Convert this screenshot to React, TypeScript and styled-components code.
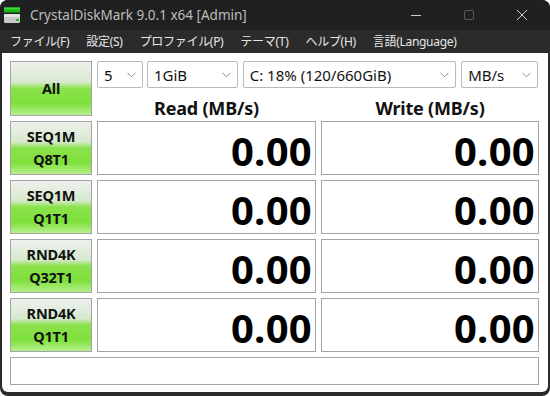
import { Fragment } from "react";
import styled, { createGlobalStyle } from "styled-components";

const GlobalStyle = createGlobalStyle`
  html, body {
    margin: 0;
    padding: 0;
    background: #ffffff;
  }
  * {
    box-sizing: border-box;
  }
`;

const UI_FONT = `"Noto Sans", "Noto Sans CJK JP", sans-serif`;

const WindowFrame = styled.div`
  width: 550px;
  height: 396px;
  display: flex;
  flex-direction: column;
  background: #2b2b2b;
  border-radius: 8px;
  overflow: hidden;
  font-family: ${UI_FONT};
`;

const TitleBar = styled.div`
  height: 30px;
  display: flex;
  align-items: center;
  background: #202020;
  padding-left: 4px;
`;

const TitleText = styled.span`
  margin-left: 9px;
  font-size: 13.5px;
  color: #bdbdbd;
  flex: 1;
`;

const WindowControls = styled.div`
  display: flex;
  height: 100%;
  padding-right: 2px;
`;

const ControlButton = styled.div`
  width: 53px;
  height: 100%;
  display: flex;
  align-items: center;
  justify-content: center;
`;

const MenuBar = styled.div`
  height: 22px;
  display: flex;
  align-items: center;
  padding-left: 1px;
  background: #2b2b2b;
`;

const MenuItem = styled.span`
  padding: 0 8px 0 9px;
  font-size: 12px;
  color: #e6e6e6;
  letter-spacing: -0.3px;
`;

const Client = styled.div`
  flex: 1;
  margin: 1px 2px 4px 2px;
  background: #ffffff;
  border-radius: 0 0 6px 6px;
  padding: 8px 9px 0 8px;
  display: grid;
  grid-template-columns: 82px 219px 218px;
  grid-template-rows: 55px repeat(4, 54px) 28px;
  gap: 5px;
`;

const TestButton = styled.div`
  border: 1px solid #a4a4a4;
  background: linear-gradient(
    to bottom,
    #eef1ee 0%,
    #d6e9cd 38%,
    #8be24c 50%,
    #7ee03a 78%,
    #b6f08e 100%
  );
  display: flex;
  flex-direction: column;
  align-items: center;
  justify-content: center;
  font-weight: 700;
  font-size: 14.5px;
  line-height: 23px;
  color: #111;
  letter-spacing: -0.2px;
`;

const TopPanel = styled.div`
  grid-column: 2 / 4;
  display: flex;
  flex-direction: column;
`;

const SelectRow = styled.div`
  display: flex;
  gap: 4px;
  height: 27px;
`;

const Select = styled.div<{ w: number }>`
  width: ${p => p.w}px;
  margin-right: ${p => (p.w === 46 ? 0 : 1)}px;
  border: 1px solid #b9b9b9;
  border-radius: 2px;
  display: flex;
  align-items: center;
  justify-content: space-between;
  padding: 0 6px 0 6px;
  font-size: 15px;
  color: #111;
  background: #fff;
`;

const HeaderRow = styled.div`
  flex: 1;
  display: grid;
  grid-template-columns: 219px 218px;
  column-gap: 5px;
  align-items: end;
`;

const ColumnHeader = styled.div`
  text-align: center;
  font-weight: 700;
  font-size: 18px;
  line-height: 18px;
  margin-bottom: -1px;
  color: #111;
  letter-spacing: -0.2px;
`;

const ResultBox = styled.div`
  border: 1px solid #a4a4a4;
  display: flex;
  align-items: center;
  justify-content: flex-end;
  padding: 4px 3px 0 0;
  font-weight: 700;
  font-size: 40px;
  color: #000;
  letter-spacing: 0.3px;
`;

const StatusBar = styled.div`
  grid-column: 1 / 4;
  border: 1px solid #a4a4a4;
`;

function Chevron() {
  return (
    <svg width="9" height="6" viewBox="0 0 9 6">
      <path d="M0.5 0.8 L4.5 4.8 L8.5 0.8" fill="none" stroke="#8a8a8a" strokeWidth="1" />
    </svg>
  );
}

function AppIcon() {
  return (
    <svg width="17" height="17" viewBox="0 0 17 17">
      <rect x="0" y="0.5" width="16" height="5" fill="#16b816" />
      <rect x="0" y="0.5" width="16" height="2" fill="#3cd83c" />
      <rect x="0" y="7" width="16" height="9" rx="1.5" fill="#c8c8c8" />
      <rect x="0" y="7" width="16" height="3" rx="1" fill="#e4e4e4" />
      <rect x="12" y="12" width="3" height="2" fill="#22c422" />
    </svg>
  );
}

const tests = [
  ["SEQ1M", "Q8T1"],
  ["SEQ1M", "Q1T1"],
  ["RND4K", "Q32T1"],
  ["RND4K", "Q1T1"],
];

const menus = ["ファイル(F)", "設定(S)", "プロファイル(P)", "テーマ(T)", "ヘルプ(H)", "言語(Language)"];

export default function App() {
  return (
    <>
      <GlobalStyle />
      <WindowFrame>
        <TitleBar>
          <AppIcon />
          <TitleText>CrystalDiskMark 9.0.1 x64 [Admin]</TitleText>
          <WindowControls>
            <ControlButton>
              <svg width="12" height="12" viewBox="0 0 12 12">
                <path d="M1 6.5 H11" stroke="#cfcfcf" strokeWidth="1" />
              </svg>
            </ControlButton>
            <ControlButton>
              <svg width="12" height="12" viewBox="0 0 12 12">
                <rect x="1.5" y="1.5" width="9" height="9" rx="1.5" fill="none" stroke="#5a5a5a" strokeWidth="1" />
              </svg>
            </ControlButton>
            <ControlButton>
              <svg width="12" height="12" viewBox="0 0 12 12">
                <path d="M1 1 L11 11 M11 1 L1 11" stroke="#cfcfcf" strokeWidth="1" />
              </svg>
            </ControlButton>
          </WindowControls>
        </TitleBar>
        <MenuBar>
          {menus.map(m => (
            <MenuItem key={m}>{m}</MenuItem>
          ))}
        </MenuBar>
        <Client>
          <TestButton>All</TestButton>
          <TopPanel>
            <SelectRow>
              <Select w={46}>5 <Chevron /></Select>
              <Select w={91}>1GiB <Chevron /></Select>
              <Select w={214}>C: 18% (120/660GiB) <Chevron /></Select>
              <Select w={77}>MB/s <Chevron /></Select>
            </SelectRow>
            <HeaderRow>
              <ColumnHeader>Read (MB/s)</ColumnHeader>
              <ColumnHeader>Write (MB/s)</ColumnHeader>
            </HeaderRow>
          </TopPanel>
          {tests.map(([a, b]) => (
            <Fragment key={a + b}>
              <TestButton>
                <span>{a}</span>
                <span>{b}</span>
              </TestButton>
              <ResultBox>0.00</ResultBox>
              <ResultBox>0.00</ResultBox>
            </Fragment>
          ))}
          <StatusBar />
        </Client>
      </WindowFrame>
    </>
  );
}
